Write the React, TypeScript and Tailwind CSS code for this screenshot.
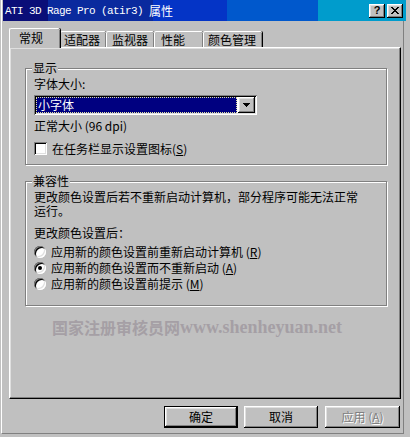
import type { ReactNode } from "react";

const raised =
  "shadow-[inset_-1px_-1px_0_#000,inset_1px_1px_0_#fff,inset_-2px_-2px_0_#808080,inset_2px_2px_0_#dfdfdf]";
const sunken =
  "shadow-[inset_1px_1px_0_#808080,inset_-1px_-1px_0_#fff,inset_2px_2px_0_#000,inset_-2px_-2px_0_#dfdfdf]";

function GroupBox({
  title,
  className,
  children,
}: {
  title: string;
  className: string;
  children: ReactNode;
}) {
  return (
    <div
      className={`relative ml-[15px] w-[362px] border border-[#808080] shadow-[inset_1px_1px_0_#fff,1px_1px_0_#fff] ${className}`}
    >
      {/* legend sits on the etched line */}
      <span className="absolute -top-[8px] left-[6px] bg-[#c0c0c0] px-[1px] text-[12px] leading-[14px]">
        {title}
      </span>
      {children}
    </div>
  );
}

function Radio({ checked, children }: { checked?: boolean; children: ReactNode }) {
  return (
    <div className="flex h-[16px] items-center gap-[5px]">
      <div
        className={`flex h-[12px] w-[12px] items-center justify-center rounded-full bg-white ${sunken}`}
      >
        {checked && <div className="h-[4px] w-[4px] rounded-full bg-black" />}
      </div>
      <span className="text-[12px] leading-[14px]">{children}</span>
    </div>
  );
}

function Tab({ label, pl, width }: { label: string; pl: string; width: string }) {
  return (
    <div
      className={`h-[16px] ${width} ${pl} rounded-t-[2px] border-l border-t border-white pt-[1px] text-[12px] leading-[13px] shadow-[inset_-1px_0_0_#808080,1px_0_0_#000]`}
    >
      {label}
    </div>
  );
}

export default function App() {
  return (
    <div className="h-[437px] w-[410px] overflow-hidden bg-[#c0c0c0] pl-[1px] text-black [font-family:'Noto_Sans_CJK_SC',sans-serif]">
      <div className="h-[434px] w-[403px] border-b border-l border-r border-b-[#808080] border-l-white border-r-[#808080]">
        {/* Title bar */}
        <div className="ml-[1px] flex h-[21px] w-[403px] items-center bg-[linear-gradient(90deg,#0a0e78_0_45px,#0a2a9e_45px_150px,#0434c6_150px_224px,#0058cc_224px_315px,#009ccc_315px)] pl-[2px] pr-[3px] text-white">
          <span className="w-[139px] whitespace-nowrap text-[11px] leading-[12px] tracking-[-0.6px] [font-family:'Liberation_Mono',monospace]">
            ATI 3D Rage Pro (atir3)
          </span>
          <span className="ml-[5px] text-[12px] leading-[14px]">属性</span>
          <div className="ml-auto flex gap-[2px]">
            <div
              className={`flex h-[14px] w-[16px] items-center justify-center bg-[#c0c0c0] text-[11px] font-bold leading-[11px] text-black [font-family:'Liberation_Sans',sans-serif] ${raised}`}
            >
              ?
            </div>
            <div
              className={`flex h-[14px] w-[16px] items-center justify-center bg-[#c0c0c0] ${raised}`}
            >
              <svg width="8" height="7" viewBox="0 0 8 7" shapeRendering="crispEdges">
                <path d="M0 0h2v1h-2zM6 0h2v1h-2zM1 1h2v1h-2zM5 1h2v1h-2zM2 2h4v1h-4zM3 3h2v1h-2zM2 4h4v1h-4zM1 5h2v1h-2zM5 5h2v1h-2zM0 6h2v1h-2zM6 6h2v1h-2z" fill="#000" />
              </svg>
            </div>
          </div>
        </div>

        {/* Tabs */}
        <div className="ml-[7px] mt-[7px] flex h-[19px] items-end">
          <div className="relative z-10 -mb-[1px] h-[20px] w-[51px] rounded-t-[2px] border-l border-t border-white bg-[#c0c0c0] pl-[9px] pt-[2px] text-[12px] leading-[13px] shadow-[inset_-1px_0_0_#808080,1px_0_0_#000]">
            常规
          </div>
          <Tab label="适配器" width="w-[46px]" pl="pl-[3px]" />
          <Tab label="监视器" width="w-[48px]" pl="pl-[5px]" />
          <Tab label="性能" width="w-[49px]" pl="pl-[6px]" />
          <Tab label="颜色管理" width="w-[59px]" pl="pl-[4px]" />
        </div>

        {/* Tab page */}
        <div className="ml-[7px] h-[352px] w-[392px] border-b border-l border-r border-t border-b-black border-l-white border-r-black border-t-white shadow-[inset_-1px_-1px_0_#808080,inset_1px_1px_0_#dfdfdf]">
          <GroupBox title="显示" className="mt-[20px] h-[97px] pl-[8px] pt-[8px]">
            <div className="text-[12px] leading-[14px]">字体大小:</div>
            <div className={`mt-[4px] flex h-[20px] w-[223px] bg-white p-[2px] ${sunken}`}>
              <div className="flex flex-1 items-center border border-dotted border-[#e0e0a0] bg-[#000080] pl-[1px] text-[12px] leading-[14px] text-white">
                小字体
              </div>
              <div className={`ml-[1px] flex w-[17px] items-center justify-center bg-[#c0c0c0] ${raised}`}>
                <svg width="7" height="4" viewBox="0 0 7 4" shapeRendering="crispEdges">
                  <path d="M0 0h7v1h-7zM1 1h5v1h-5zM2 2h3v1h-3zM3 3h1v1h-1z" fill="#000" />
                </svg>
              </div>
            </div>
            <div className="mt-[4px] text-[12px] leading-[14px]">正常大小 (96 dpi)</div>
            <div className="mt-[9px] flex h-[13px] items-center gap-[5px]">
              <div className={`h-[13px] w-[13px] bg-white ${sunken}`} />
              <span className="text-[12px] leading-[14px]">
                在任务栏显示设置图标(<u>S</u>)
              </span>
            </div>
          </GroupBox>

          <GroupBox title="兼容性" className="mt-[16px] h-[125px] pl-[8px] pt-[8px]">
            <p className="text-[12px] leading-[14px]">
              更改颜色设置后若不重新启动计算机，部分程序可能无法正常
              <br />
              运行。
            </p>
            <div className="mt-[8px] text-[12px] leading-[14px]">更改颜色设置后：</div>
            <div className="mt-[4px] flex flex-col">
              <Radio>
                应用新的颜色设置前重新启动计算机 (<u>R</u>)
              </Radio>
              <Radio checked>
                应用新的颜色设置而不重新启动 (<u>A</u>)
              </Radio>
              <Radio>
                应用新的颜色设置前提示 (<u>M</u>)
              </Radio>
            </div>
          </GroupBox>

          {/* watermark */}
          <div className="ml-[42px] mt-[11px] flex h-[20px] items-center font-bold text-[#a59fa5]">
            <span className="text-[16px] leading-[20px] [font-family:'Noto_Sans_CJK_SC',sans-serif]">
              国家注册审核员网
            </span>
            <span className="text-[18px] leading-[20px] [font-family:'Liberation_Serif',serif]">
              www.shenheyuan.net
            </span>
          </div>
        </div>

        {/* Dialog buttons */}
        <div className="ml-[162px] mt-[7px] flex gap-[6px]">
          <div
            className={`flex h-[22px] w-[74px] items-center justify-center border border-black bg-[#c0c0c0] text-[12px] leading-[14px] ${raised}`}
          >
            确定
          </div>
          <div
            className={`flex h-[22px] w-[74px] items-center justify-center bg-[#c0c0c0] text-[12px] leading-[14px] ${raised}`}
          >
            取消
          </div>
          <div
            className={`ml-px flex h-[22px] w-[75px] items-center justify-center bg-[#c0c0c0] text-[12px] leading-[14px] text-[#808080] [text-shadow:1px_1px_0_#fff] ${raised}`}
          >
            应用 (<u>A</u>)
          </div>
        </div>
      </div>
    </div>
  );
}
